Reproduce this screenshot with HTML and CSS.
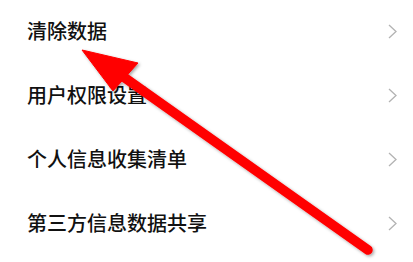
FILE: index.html
```html
<!DOCTYPE html>
<html lang="zh">
<head>
<meta charset="utf-8">
<link rel="stylesheet" href="styles.css">
</head>
<body>
<div class="page">
  <ul class="menu">
    <li class="row"><span class="label">清除数据</span><svg class="chev" width="9" height="15" viewBox="0 0 9 15"><path d="M1 1 L8 7.5 L1 14" /></svg></li>
    <li class="row"><span class="label">用户权限设置</span><svg class="chev" width="9" height="15" viewBox="0 0 9 15"><path d="M1 1 L8 7.5 L1 14" /></svg></li>
    <li class="row"><span class="label">个人信息收集清单</span><svg class="chev" width="9" height="15" viewBox="0 0 9 15"><path d="M1 1 L8 7.5 L1 14" /></svg></li>
    <li class="row"><span class="label">第三方信息数据共享</span><svg class="chev" width="9" height="15" viewBox="0 0 9 15"><path d="M1 1 L8 7.5 L1 14" /></svg></li>
  </ul>
  <svg class="arrow" width="413" height="262" viewBox="0 0 413 262">
    <defs>
      <filter id="sh" x="-20%" y="-20%" width="140%" height="140%">
        <feDropShadow dx="1.5" dy="1.5" stdDeviation="1.5" flood-color="#000" flood-opacity="0.35"/>
      </filter>
    </defs>
    <g filter="url(#sh)" fill="#ff0000" stroke="#ff0000">
      <line x1="118" y1="73" x2="368" y2="250" stroke-width="9.5" stroke-linecap="round"/>
      <polygon points="82,50 138,63 113,91" stroke-width="1" stroke-linejoin="round"/>
    </g>
  </svg>
</div>
</body>
</html>
```
FILE: styles.css
```css
html, body {
  margin: 0;
  padding: 0;
  background: #ffffff;
}
.page {
  position: relative;
  width: 413px;
  height: 262px;
  overflow: hidden;
  font-family: "Noto Sans CJK SC", "Noto Sans", sans-serif;
}
.menu {
  list-style: none;
  margin: -1px 0 0 0;
  padding: 0;
}
.row {
  display: flex;
  align-items: center;
  justify-content: space-between;
  height: 64px;
  padding: 0 16px 0 27px;
}
.label {
  font-size: 20px;
  font-weight: 500;
  color: #111111;
  line-height: 1;
}
.chev path {
  fill: none;
  stroke: #b3b3b3;
  stroke-width: 1.3;
}
.arrow {
  position: absolute;
  left: 0;
  top: 0;
  pointer-events: none;
}
```
